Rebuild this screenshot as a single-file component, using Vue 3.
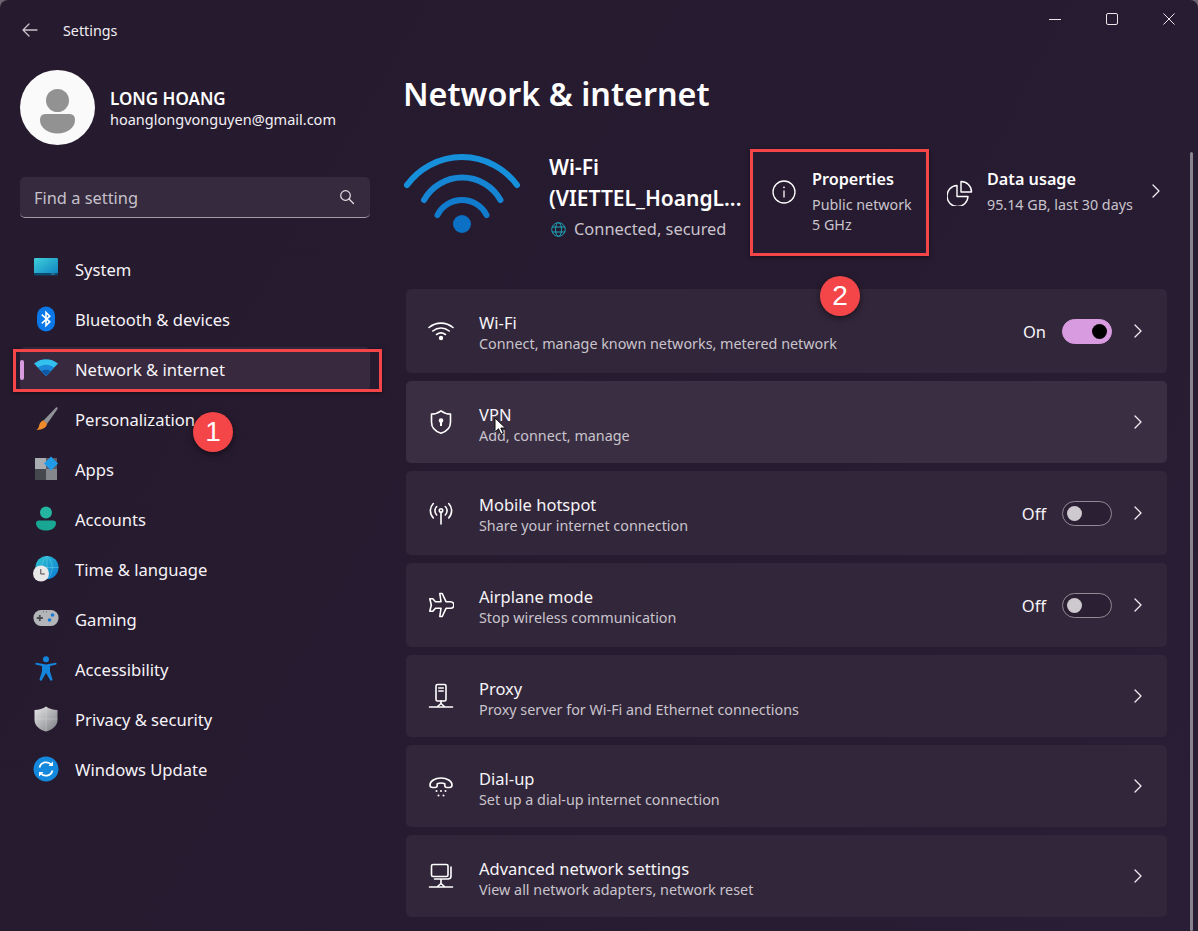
<script setup>
const stroke = 'fill="none" stroke="#fff" stroke-width="1.6" stroke-linecap="round" stroke-linejoin="round"'

const navItems = [
  { label: 'System', icon: '<defs><linearGradient id="sy" x1="0" y1="0" x2="1" y2="1"><stop offset="0" stop-color="#3fd0d8"/><stop offset="1" stop-color="#0f82c4"/></linearGradient></defs><rect x="1" y="2" width="24" height="16" rx="1.2" fill="url(#sy)"/><path d="M1 17h24v1.6a1 1 0 0 1-1 1H2a1 1 0 0 1-1-1z" fill="#0d4a6e"/><path d="M18.5 18h1M20.5 18h1" stroke="#9fd6ea" stroke-width=".8"/>' },
  { label: 'Bluetooth & devices', icon: '<rect x="4" y="0.5" width="18" height="25" rx="9" fill="#0a78e8"/><path d="M8.8 8.6l8 7.2-3.8 3.8V6.4l3.8 3.8-8 7.2" fill="none" stroke="#fff" stroke-width="1.6"/>' },
  { label: 'Network & internet', icon: '<path d="M1 7.5C8 1.8 18 1.8 25 7.5L13 20z" fill="#32c0ee"/><path d="M5 11.5c5-3.6 11-3.6 16 0L13 20z" fill="#1c86d8"/><path d="M8.5 15c3-1.8 6-1.8 9 0L13 20z" fill="#0e5aa8"/>' },
  { label: 'Personalization', icon: '<path d="M10.5 14.5L23 1.6c1-.8 2.2.2 1.5 1.4L14 18z" fill="#8f9297"/><path d="M10.5 14.2l3.6 3.6c-.8 4-4.6 6.2-10.8 6.2 2.6-1.4 2.4-3.6 3.2-5.8.8-2.2 2.4-3.4 4-4z" fill="#ee8a2c"/>' },
  { label: 'Apps', icon: '<rect x="2" y="2" width="11" height="11" fill="#a9adb2"/><rect x="2" y="13" width="11" height="11" fill="#45484c"/><rect x="13" y="13" width="11" height="11" fill="#84888c"/><rect x="13" y="2" width="11" height="11" fill="#70757a" opacity=".7"/><path d="M18 0.5l7 7-7 7-7-7z" fill="#1f9be8"/>' },
  { label: 'Accounts', icon: '<circle cx="13" cy="6.6" r="6" fill="#23b5a0"/><path d="M3 17c0-1.6 1.2-2.6 3-2.6h14c1.8 0 3 1 3 2.6 0 5-4.6 7.6-10 7.6S3 22 3 17z" fill="#19a692"/>' },
  { label: 'Time & language', icon: '<defs><linearGradient id="gl" x1="0" y1="0" x2="1" y2="1"><stop offset="0" stop-color="#2cc6cf"/><stop offset="1" stop-color="#0d79d6"/></linearGradient></defs><circle cx="14" cy="11.5" r="11.5" fill="url(#gl)"/><path d="M14 0v23M2.5 11.5h23M14 0c-7 6-7 17 0 23M14 0c7 6 7 17 0 23" fill="none" stroke="#7edcef" stroke-width=".6" opacity=".7"/><circle cx="8" cy="17.5" r="8" fill="#e8e8e8"/><path d="M7.8 13v5h4" fill="none" stroke="#444" stroke-width="1"/>' },
  { label: 'Gaming', icon: '<rect x="0.5" y="4" width="25" height="16" rx="7.5" fill="#b3b5b8"/><path d="M6.8 9v6M3.8 12h6" stroke="#4a4c4f" stroke-width="1.8"/><circle cx="19.5" cy="9" r="1.8" fill="#1578d8"/><circle cx="16.5" cy="14" r="1.8" fill="#1578d8"/><path d="M10 5.8h.8M13 5.8h.8" stroke="#555" stroke-width="1"/>' },
  { label: 'Accessibility', icon: '<circle cx="13" cy="3.2" r="3" fill="#1484dc"/><path d="M3.2 6.800c-1.400.4-1 2.200.4 2L9 10v5.500l-2.400 7.600c-.5 1.700 1.700 2.400 2.300.8L13 17l4.100 6.900c.7 1.600 2.800.9 2.300-.8L17 15.500V10l5.400-1.200c1.400-.2 1.800-1.600.4-2L13 8.500z" fill="#1484dc"/>' },
  { label: 'Privacy & security', icon: '<defs><linearGradient id="sh" x1="0" y1="0" x2="1" y2="1"><stop offset="0" stop-color="#e6e7e8"/><stop offset="1" stop-color="#7b7e82"/></linearGradient></defs><path d="M13 .5c3 2.400 7 3.400 11.500 3.500v10c0 5.500-4.500 9.500-11.500 11.500C6 23.500 1.500 19.500 1.500 14V4C6 3.900 10 2.900 13 .5z" fill="url(#sh)"/><path d="M13 .5v25M1.500 13h23" stroke="#fff" stroke-width=".6" opacity=".35"/>' },
  { label: 'Windows Update', icon: '<circle cx="13" cy="13" r="12.5" fill="#1488dc"/><path d="M6.500 11.500a6.800 6.800 0 0 1 12-2.500M19.500 14.500a6.800 6.800 0 0 1-12 2.500" fill="none" stroke="#fff" stroke-width="1.8"/><path d="M20 5.500v4.500h-4.500zM6 20.500V16h4.500z" fill="#fff"/>' }
]

const rows = [
  { title: 'Wi-Fi', sub: 'Connect, manage known networks, metered network', toggle: 'On', height: 84,
    icon: `<g ${stroke}><path d="M1 9.500c7-5.900 17-5.900 24 0M4.800 13c5-4 11.400-4 16.400 0M8.600 16.500c3-2.200 5.800-2.200 8.800 0"/></g><circle cx="13" cy="20" r="2.200" fill="#fff"/>` },
  { title: 'VPN', sub: 'Add, connect, manage', height: 82, hover: true,
    icon: `<path ${stroke} d="M13 1.800c2.800 2.200 6 3.200 9.500 3.200v8c0 5.600-3.800 9.500-9.500 11.200C7.300 22.500 3.500 18.600 3.500 13V5C7 5 10.200 4 13 1.800z"/><circle cx="13" cy="11.500" r="2.300" fill="#fff"/><path d="M12 12h2v5h-2z" fill="#fff"/>` },
  { title: 'Mobile hotspot', sub: 'Share your internet connection', toggle: 'Off', height: 84,
    icon: `<g ${stroke}><path d="M13 12v12"/><circle cx="13" cy="10.500" r="1.700"/><path d="M8.700 6.500a6 6 0 0 0 0 8.500M17.300 6.500a6 6 0 0 1 0 8.500M5.300 3.500a10.500 10.500 0 0 0 0 14.500M20.700 3.500a10.500 10.500 0 0 1 0 14.500"/></g>` },
  { title: 'Airplane mode', sub: 'Stop wireless communication', toggle: 'Off', height: 84,
    icon: `<path ${stroke} d="M11.800 1.500h2.400l3.800 8.200h4.500c2 0 3.300 1.400 3.300 3.300s-1.300 3.300-3.300 3.300H18l-3.800 8.200h-2.400l1.200-8.200H7.500l-2.700 3H1.800l1.500-6.300-1.500-6.300h3l2.700 3H13z"/>` },
  { title: 'Proxy', sub: 'Proxy server for Wi-Fi and Ethernet connections', height: 82,
    icon: `<g ${stroke}><rect x="8" y="1.500" width="10" height="16.500" rx="1.500"/><path d="M10.800 5h4.400M10.800 8h4.400M13 18v2.500M1.500 24h23M9 24l4-3.500 4 3.500"/></g>` },
  { title: 'Dial-up', sub: 'Set up a dial-up internet connection', height: 82,
    icon: `<path ${stroke} d="M2 12c0-4 5-7 11-7s11 3 11 7c0 1.800-1 2.500-2.500 2.500H19c-1.500 0-2.200-.8-2.200-2v-1.800c-2.400-.8-5.200-.8-7.600 0v1.800c0 1.200-.7 2-2.200 2H4.500C3 14.500 2 13.800 2 12z"/><g fill="#fff"><circle cx="8.500" cy="18" r="1"/><circle cx="13" cy="18" r="1"/><circle cx="17.500" cy="18" r="1"/><circle cx="10.500" cy="22.500" r="1"/><circle cx="15.500" cy="22.500" r="1"/></g>` },
  { title: 'Advanced network settings', sub: 'View all network adapters, network reset', height: 82,
    icon: `<g ${stroke}><rect x="3.500" y="1.500" width="16.500" height="12" rx="1.500"/><path d="M23 4v9c0 2-1 3-3 3H6.500M13 16v4.500M1.500 24h23M9 24l4-3.500 4 3.500"/></g>` }
]
</script>

<template>
  <div class="window">
    <aside class="sidebar">
      <div class="titlebar">
        <svg class="back" width="16" height="14" viewBox="0 0 16 14" fill="none" stroke="#c9c4cc" stroke-width="1.300" stroke-linecap="round" stroke-linejoin="round"><path d="M1 7h14M7 1L1 7l6 6" /></svg>
        <span>Settings</span>
      </div>

      <div class="user">
        <div class="avatar">
          <svg width="75" height="75" viewBox="0 0 75 75"><circle cx="37.500" cy="30.500" r="11.500" fill="#929292" /><path d="M20 50c0-4 2-6 6-6h23c4 0 6 2 6 6 0 8-8 13.500-17.500 13.500S20 58 20 50z" fill="#929292" /></svg>
        </div>
        <div class="user-text">
          <div class="user-name">LONG HOANG</div>
          <div class="user-mail">hoanglongvonguyen@gmail.com</div>
        </div>
      </div>

      <div class="search">
        <span>Find a setting</span>
        <svg width="16" height="16" viewBox="0 0 16 16" fill="none" stroke="#e6e3e8" stroke-width="1.200" stroke-linecap="round"><circle cx="6.500" cy="6.500" r="4.800" /><path d="M10 10l4.500 4.500" /></svg>
      </div>

      <nav class="nav">
        <div v-for="item in navItems" :key="item.label" class="nav-item" :class="{ active: item.label === 'Network & internet' }">
          <svg class="nav-icon" width="26" height="26" viewBox="0 0 26 26" v-html="item.icon"></svg>
          <span>{{ item.label }}</span>
        </div>
      </nav>
    </aside>

    <main class="main">
      <div class="controls">
        <div class="ctl"><svg width="12" height="12" viewBox="0 0 12 12" stroke="#e8e6ea" fill="none"><path d="M0 6.500h12" /></svg></div>
        <div class="ctl"><svg width="12" height="12" viewBox="0 0 12 12" stroke="#e8e6ea" fill="none"><rect x=".5" y=".5" width="11" height="11" rx="1.500" /></svg></div>
        <div class="ctl"><svg width="12" height="12" viewBox="0 0 12 12" stroke="#e8e6ea" fill="none"><path d="M.5.500l11 11M11.500.500l-11 11" /></svg></div>
      </div>

      <h1 class="page-title">Network &amp; internet</h1>

      <section class="hero">
        <div class="hero-icon">
          <svg width="118" height="82" viewBox="0 0 118 82" fill="none" stroke-linecap="round">
            <path d="M3 33A68 68 0 0 1 113 33" stroke="#1790dc" stroke-width="6" />
            <path d="M20 48A43.800 43.800 0 0 1 96.500 48" stroke="#1585d4" stroke-width="6" />
            <path d="M33.500 63A27.500 27.500 0 0 1 82.500 63" stroke="#117ccd" stroke-width="6" />
            <circle cx="58" cy="72" r="9" fill="#0c70c4" />
          </svg>
        </div>
        <div class="hero-name">
          <div class="hero-ssid">Wi-Fi<br />(VIETTEL_HoangL...</div>
          <div class="hero-status">
            <svg width="15" height="15" viewBox="0 0 15 15" fill="none" stroke="#1ea6b8" stroke-width="1"><circle cx="7.500" cy="7.500" r="6.800" /><ellipse cx="7.500" cy="7.500" rx="3" ry="6.800" /><path d="M1 5h13M1 10h13" /></svg>
            <span>Connected, secured</span>
          </div>
        </div>
        <div class="hero-cell props">
          <svg class="cell-icon" width="24" height="24" viewBox="0 0 24 24" fill="none" stroke="#fff" stroke-width="1.300"><circle cx="12" cy="12" r="11" /><path d="M12 10.500v7" /><circle cx="12" cy="7.300" r=".9" fill="#fff" stroke="none" /></svg>
          <div>
            <div class="cell-title">Properties</div>
            <div class="cell-sub">Public network</div>
            <div class="cell-sub">5 GHz</div>
          </div>
        </div>
        <div class="hero-cell usage">
          <svg class="cell-icon" width="26" height="26" viewBox="0 0 26 26" fill="none" stroke="#fff" stroke-width="1.400" stroke-linejoin="round"><path d="M10 5.500A10.500 10.500 0 1 0 21 16.500H10z" /><path d="M14 1.500a10.500 10.500 0 0 1 10.500 10.500H14z" /></svg>
          <div>
            <div class="cell-title">Data usage</div>
            <div class="cell-sub">95.14 GB, last 30 days</div>
          </div>
          <svg class="chev" width="8" height="14" viewBox="0 0 8 14" fill="none" stroke="#f0eef2" stroke-width="1.300" stroke-linecap="round" stroke-linejoin="round"><path d="M1 1l6 6-6 6" /></svg>
        </div>
      </section>

      <section class="rows">
        <div v-for="row in rows" :key="row.title" class="row" :class="{ hover: row.hover }" :style="{ height: row.height + 'px' }">
          <svg class="row-icon" width="26" height="26" viewBox="0 0 26 26" v-html="row.icon"></svg>
          <div class="row-text">
            <div class="row-title">{{ row.title }}</div>
            <div class="row-sub">{{ row.sub }}</div>
          </div>
          <template v-if="row.toggle">
            <span class="toggle-label">{{ row.toggle }}</span>
            <span class="toggle" :class="{ on: row.toggle === 'On' }"><i></i></span>
          </template>
          <svg class="chev" width="8" height="14" viewBox="0 0 8 14" fill="none" stroke="#f0eef2" stroke-width="1.300" stroke-linecap="round" stroke-linejoin="round"><path d="M1 1l6 6-6 6" /></svg>
        </div>
      </section>
    </main>

    <!-- annotations laid over the screenshot -->
    <div class="scrollbar"></div>
    <div class="mark mark-nav"></div>
    <div class="mark mark-props"></div>
    <div class="badge badge-one">1</div>
    <div class="badge badge-two">2</div>
    <svg class="cursor" width="13" height="18" viewBox="0 0 13 18"><path d="M1 1v14l3.500-3.200 2.500 5.400 2.300-1-2.500-5.200H11.500z" fill="#fff" stroke="#111" stroke-width="1" /></svg>
  </div>
</template>

<style>
html, body {
  margin: 0;
  background: #6a6570;
}
</style>

<style scoped>
.window {
  position: relative;
  display: flex;
  width: 1198px;
  height: 931px;
  overflow: hidden;
  border-radius: 8px 8px 0 0;
  background: linear-gradient(120deg, #261a2e 0%, #271b31 60%, #2a1e36 100%);
  color: #fff;
  font-family: "Noto Sans", "Open Sans", sans-serif;
}

.sidebar {
  flex: 0 0 390px;
  padding: 0 20px;
  box-sizing: border-box;
}
.titlebar {
  display: flex;
  align-items: center;
  height: 60px;
  font-size: 14.300px;
  color: #f0eef2;
}
.back {
  margin: 0 25px 0 2px;
}
.user {
  display: flex;
  align-items: center;
  gap: 15px;
  margin-top: 10px;
}
.avatar {
  width: 75px;
  height: 75px;
  border-radius: 50%;
  background: #fafafa;
  overflow: hidden;
}
.avatar svg {
  display: block;
}
.user-name {
  font-size: 17px;
  font-weight: 600;
  line-height: 22px;
  margin-top: 2px;
}
.user-mail {
  font-size: 14.500px;
  line-height: 19px;
  color: #f2f0f4;
}
.search {
  display: flex;
  align-items: center;
  justify-content: space-between;
  height: 41px;
  margin-top: 32px;
  padding: 0 15px 0 14px;
  box-sizing: border-box;
  border-radius: 5px;
  border-bottom: 1px solid #a39aa8;
  background: #362a3e;
  font-size: 16.400px;
  color: #c6c1ca;
}
.nav {
  display: flex;
  flex-direction: column;
  gap: 6px;
  margin-top: 29px;
}
.nav-item {
  position: relative;
  display: flex;
  align-items: center;
  gap: 16px;
  height: 44px;
  padding-left: 13px;
  border-radius: 5px;
  font-size: 16.600px;
  color: #f6f4f8;
}
.nav-item.active {
  background: #38293f;
}
.nav-item.active::before {
  content: "";
  position: absolute;
  left: 0;
  top: 13px;
  width: 4px;
  height: 20px;
  border-radius: 2px;
  background: #d99be0;
}

.main {
  flex: 1;
  min-width: 0;
  padding: 0 31px 0 16px;
}
.controls {
  display: flex;
  justify-content: flex-end;
  height: 38px;
  margin-right: -30px;
}
.ctl {
  display: flex;
  align-items: center;
  justify-content: center;
  width: 57px;
}
.page-title {
  margin: 32px 0 0 -3px;
  font-size: 32.300px;
  font-weight: 600;
  line-height: 46px;
}
.hero {
  display: flex;
  height: 105px;
  margin-top: 34px;
}
.hero-icon {
  flex: 0 0 145px;
  padding-top: 2px;
  margin-left: -2px;
}
.hero-name {
  flex: 0 0 202px;
}
.hero-ssid {
  font-size: 21px;
  font-weight: 600;
  line-height: 31px;
  margin-top: 2px;
  white-space: nowrap;
}
.hero-status {
  display: flex;
  align-items: center;
  gap: 8px;
  margin-top: 3px;
  font-size: 16.400px;
  line-height: 24px;
  color: #c9c4cc;
  padding-left: 2px;
}
.hero-cell {
  display: flex;
  align-items: flex-start;
  padding-top: 16px;
  box-sizing: border-box;
}
.props {
  flex: 0 0 177px;
  padding-left: 21px;
  gap: 16px;
}
.props .cell-icon {
  margin-top: 13.500px;
}
.usage {
  flex: 1;
  padding-left: 19px;
  gap: 14px;
}
.usage .cell-icon {
  margin-top: 14px;
}
.usage .chev {
  margin: 18px 0 0 5px;
}
.cell-title {
  margin-bottom: 3px;
  font-size: 16.200px;
  font-weight: 600;
  line-height: 26px;
}
.cell-sub {
  font-size: 14.300px;
  line-height: 20px;
  color: #c9c4cc;
  white-space: nowrap;
}

.rows {
  display: flex;
  flex-direction: column;
  gap: 8px;
  margin-top: 34px;
}
.row {
  display: flex;
  align-items: center;
  padding: 0 25px 0 22px;
  border-radius: 5px;
  background: #32263a;
}
.row.hover {
  background: #3a2e43;
}
.row-icon {
  flex: none;
}
.row-text {
  flex: 1;
  align-self: flex-start;
  margin-left: 25px;
  padding-top: 23px;
}
.row-title {
  font-size: 16.500px;
  line-height: 22px;
  color: #f6f4f8;
}
.row-sub {
  font-size: 14.350px;
  line-height: 20px;
  color: #c9c4cc;
}
.toggle-label {
  margin-right: 16px;
  font-size: 16.500px;
  color: #f6f4f8;
}
.toggle {
  display: flex;
  align-items: center;
  width: 50px;
  height: 25px;
  margin-right: 22px;
  padding: 0 4px;
  box-sizing: border-box;
  border: 1.500px solid #8f8a94;
  border-radius: 13px;
  background: #2b2033;
}
.toggle i {
  width: 15px;
  height: 15px;
  border-radius: 50%;
  background: #cdc9cf;
}
.toggle.on {
  justify-content: flex-end;
  border-color: #d99be0;
  background: #d99be0;
}
.toggle.on i {
  background: #000;
}

.scrollbar {
  position: absolute;
  left: 1190px;
  top: 152px;
  bottom: 0;
  width: 3px;
  border-radius: 2px;
  background: #88838e;
}
.mark {
  position: absolute;
  box-sizing: border-box;
  border: 3px solid #f44649;
  box-shadow: 0 1px 4px rgba(0, 0, 0, 0.5);
}
.mark-nav {
  left: 13px;
  top: 349px;
  width: 369px;
  height: 43px;
}
.mark-props {
  left: 750px;
  top: 149px;
  width: 179px;
  height: 107px;
}
.badge {
  position: absolute;
  display: flex;
  align-items: center;
  justify-content: center;
  width: 40px;
  height: 40px;
  border-radius: 50%;
  background: #f44649;
  box-shadow: 0 2px 6px rgba(0, 0, 0, 0.5);
  font-family: "Liberation Sans", sans-serif;
  font-size: 28px;
}
.badge-one {
  left: 193px;
  top: 412px;
}
.badge-two {
  left: 820px;
  top: 276px;
}
.cursor {
  position: absolute;
  left: 494px;
  top: 417px;
}
</style>
